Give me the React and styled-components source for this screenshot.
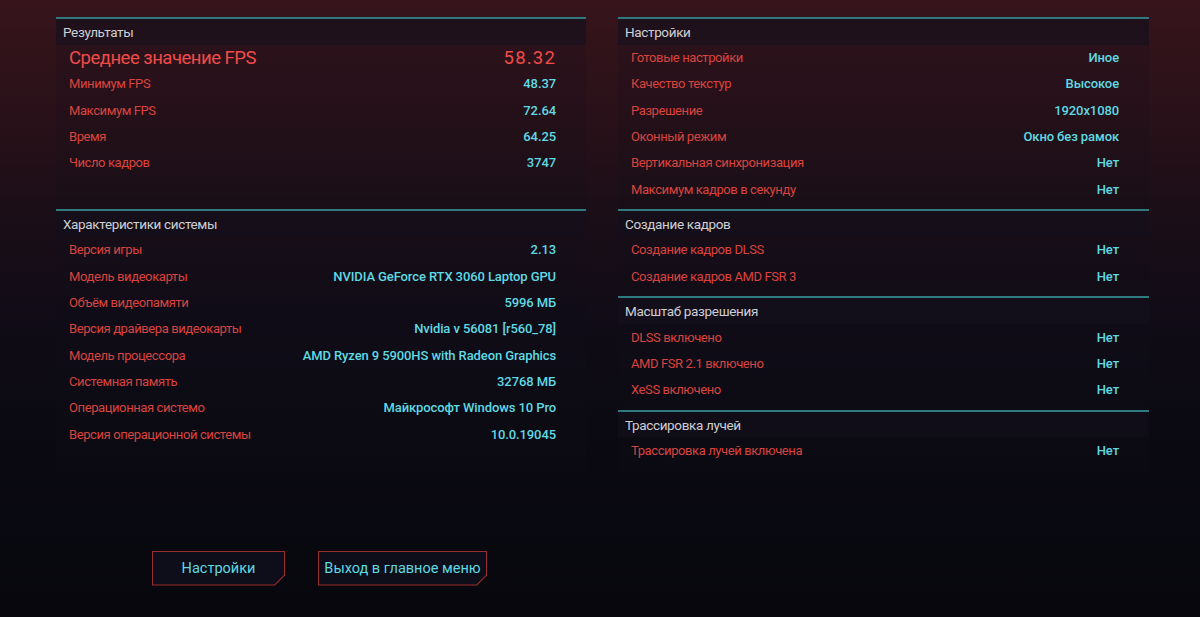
import styled, { createGlobalStyle } from "styled-components"

const GlobalStyle = createGlobalStyle`
    html, body {
        margin: 0;
        padding: 0;
        background: #06060c;
    }
    * {
        box-sizing: border-box;
    }
`

const results = [
    ["Минимум FPS", "48.37"],
    ["Максимум FPS", "72.64"],
    ["Время", "64.25"],
    ["Число кадров", "3747"],
]

const system = [
    ["Версия игры", "2.13"],
    ["Модель видеокарты", "NVIDIA GeForce RTX 3060 Laptop GPU"],
    ["Объём видеопамяти", "5996 МБ"],
    ["Версия драйвера видеокарты", "Nvidia v 56081 [r560_78]"],
    ["Модель процессора", "AMD Ryzen 9 5900HS with Radeon Graphics"],
    ["Системная память", "32768 МБ"],
    ["Операционная системо", "Майкрософт Windows 10 Pro"],
    ["Версия операционной системы", "10.0.19045"],
]

const settings = [
    ["Готовые настройки", "Иное"],
    ["Качество текстур", "Высокое"],
    ["Разрешение", "1920x1080"],
    ["Оконный режим", "Окно без рамок"],
    ["Вертикальная синхронизация", "Нет"],
    ["Максимум кадров в секунду", "Нет"],
]

const frameGen = [
    ["Создание кадров DLSS", "Нет"],
    ["Создание кадров AMD FSR 3", "Нет"],
]

const scaling = [
    ["DLSS включено", "Нет"],
    ["AMD FSR 2.1 включено", "Нет"],
    ["XeSS включено", "Нет"],
]

const rayTracing = [
    ["Трассировка лучей включена", "Нет"],
]

const Section = ({ title, rows, children }) => (
    <Panel>
        <PanelHeader>{title}</PanelHeader>
        {children}
        {rows.map(([label, value]) => (
            <Row key={label}>
                <Label>{label}</Label>
                <Value>{value}</Value>
            </Row>
        ))}
    </Panel>
)

export default function App() {
    return (
        <>
            <GlobalStyle />
            <Page>
                <Grid>
                    <Section title="Результаты" rows={results}>
                        <Row>
                            <Label $big>Среднее значение FPS</Label>
                            <Value $big>58.32</Value>
                        </Row>
                    </Section>
                    <Section title="Настройки" rows={settings} />
                    <Section title="Характеристики системы" rows={system} />
                    <Column>
                        <Section title="Создание кадров" rows={frameGen} />
                        <Section title="Масштаб разрешения" rows={scaling} />
                        <Section title="Трассировка лучей" rows={rayTracing} />
                    </Column>
                    <Buttons>
                        <Button $width={133}><span>Настройки</span></Button>
                        <Button $width={169}><span>Выход в главное меню</span></Button>
                    </Buttons>
                </Grid>
            </Page>
        </>
    )
}

const Page = styled.div`
    width: 1200px;
    height: 617px;
    overflow: hidden;
    padding: 17px 51px 0 56px;
    font-family: Roboto, "Noto Sans", sans-serif;
    background: linear-gradient(
        to bottom,
        #37141b 0%,
        #2a1119 18%,
        #1b0e17 34%,
        #110c17 50%,
        #0b0a13 68%,
        #07070d 100%
    );
`

const Grid = styled.div`
    display: grid;
    grid-template-columns: 530px 531px;
    grid-template-rows: auto auto auto;
    column-gap: 32px;
    align-items: start;
`

const Column = styled.div`
    display: flex;
    flex-direction: column;
`

const Panel = styled.div`
    border-top: 2px solid #2f7a7e;
    background: rgba(18, 16, 28, 0.18);
    padding-bottom: 7px;
    align-self: stretch;
`

const PanelHeader = styled.div`
    height: 25.5px;
    display: flex;
    align-items: center;
    padding-left: 7px;
    font-size: 13.5px;
    letter-spacing: -0.35px;
    color: #cfcfd4;
    background: rgba(20, 17, 30, 0.55);
`

const Row = styled.div`
    height: 26.3px;
    display: flex;
    align-items: center;
    justify-content: space-between;
    padding: 0 30px 0 13px;
`

const Label = styled.div`
    font-size: ${(p) => (p.$big ? "18.5px" : "13px")};
    color: ${(p) => (p.$big ? "#f04b49" : "#da433e")};
    letter-spacing: ${(p) => (p.$big ? "-0.5px" : "-0.4px")};
`

const Value = styled.div`
    font-size: ${(p) => (p.$big ? "18.5px" : "13px")};
    font-weight: ${(p) => (p.$big ? 400 : 500)};
    color: ${(p) => (p.$big ? "#f04b49" : "#5fd9e2")};
    letter-spacing: ${(p) => (p.$big ? "1.2px" : "-0.1px")};
`

const Buttons = styled.div`
    grid-column: 1;
    display: flex;
    justify-content: center;
    gap: 33px;
    margin-top: 80px;
    padding-right: 3px;
`

const Button = styled.button`
    position: relative;
    width: ${(p) => p.$width}px;
    height: 35px;
    border: none;
    padding: 0;
    background: #9b2c2c;
    clip-path: polygon(0 0, 100% 0, 100% calc(100% - 10px), calc(100% - 10px) 100%, 0 100%);
    font-family: Roboto, "Noto Sans", sans-serif;
    font-size: 14.5px;
    color: #5fd9e2;
    cursor: pointer;

    &::before {
        content: "";
        position: absolute;
        inset: 1px;
        background: #0d0e19;
        clip-path: polygon(0 0, 100% 0, 100% calc(100% - 9.6px), calc(100% - 9.6px) 100%, 0 100%);
    }

    span {
        position: relative;
    }
`
